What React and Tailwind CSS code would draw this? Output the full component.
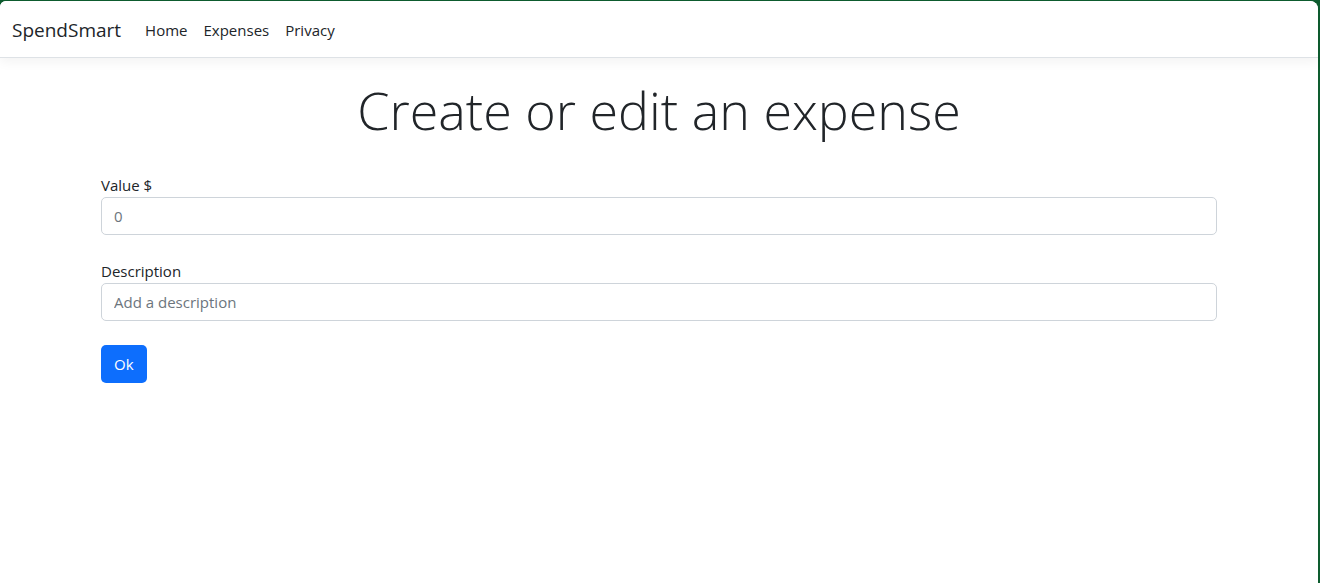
import { useState } from "react";

const font = { fontFamily: '"Open Sans", "Noto Sans", "Liberation Sans", sans-serif' };

export default function App() {
  const [value, setValue] = useState("");
  const [description, setDescription] = useState("");

  return (
    <div className="min-h-[583px] bg-[#0e5c2f] pt-px pr-[2px]" style={font}>
      <div className="min-h-[582px] rounded-tl-[6px] rounded-tr-[8px] bg-white text-[#212529]">
        <nav className="flex h-[57px] items-center border-b border-[#dee2e6] bg-white px-3 pt-[2px] shadow-[0_4px_12px_rgba(0,0,0,0.05)] rounded-tl-[6px] rounded-tr-[8px]">
          <a className="mr-6 text-[19px] text-[#212529]" href="#">
            SpendSmart
          </a>
          <ul className="flex items-center gap-4 text-[15px]">
            <li><a href="#" className="text-[#212529]">Home</a></li>
            <li><a href="#" className="text-[#212529]">Expenses</a></li>
            <li><a href="#" className="text-[#212529]">Privacy</a></li>
          </ul>
        </nav>

        <main className="mx-auto w-[1140px] px-3 pt-[21px]">
          <h1 className="mb-[32px] text-center text-[52px] font-light leading-[1.2] text-[#212529]">
            Create or edit an expense
          </h1>

          <form onSubmit={(e) => e.preventDefault()}>
            <div className="mb-[24px]">
              <label className="block text-[15px] leading-[24px]">Value $</label>
              <input
                type="number"
                value={value}
                onChange={(e) => setValue(e.target.value)}
                placeholder="0"
                className="block h-[38px] w-full rounded-[5px] border border-[#ced4da] px-3 text-[15px] text-[#212529] placeholder:text-[#6c757d] outline-none"
              />
            </div>
            <div className="mb-[24px]">
              <label className="block text-[15px] leading-[24px]">Description</label>
              <input
                type="text"
                value={description}
                onChange={(e) => setDescription(e.target.value)}
                placeholder="Add a description"
                className="block h-[38px] w-full rounded-[5px] border border-[#ced4da] px-3 text-[15px] text-[#212529] placeholder:text-[#6c757d] outline-none"
              />
            </div>
            <button
              type="submit"
              className="h-[38px] rounded-[5px] bg-[#0d6efd] px-[13px] text-[15px] text-white"
            >
              Ok
            </button>
          </form>
        </main>
      </div>
    </div>
  );
}
